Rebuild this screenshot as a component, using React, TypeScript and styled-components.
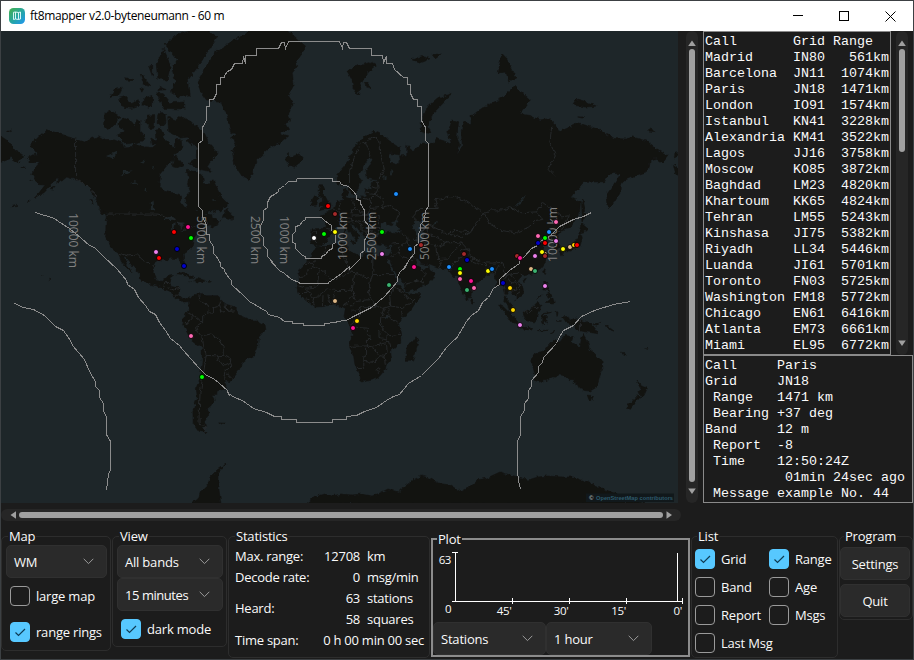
import React from 'react';
import styled, { createGlobalStyle } from 'styled-components';

const GlobalStyle = createGlobalStyle`
  * { box-sizing: border-box; }
  html, body { margin: 0; padding: 0; background: #1c1c1c; overflow: hidden; }
  body { font-family: 'Open Sans', 'Noto Sans', sans-serif; font-size: 13px; color: #fafafa; }
`;

/* ---------- geography ---------- */

const project = (lon: number, lat: number) => {
  const rad = (lat * Math.PI) / 180;
  const x = 328 + 1.79 * lon;
  const y = 315 - 102.6 * Math.log(Math.tan(Math.PI / 4 + rad / 2));
  return `${x.toFixed(1)} ${y.toFixed(1)}`;
};

const geoPath = (source: string, closed: boolean) =>
  'M' +
  source
    .split(',')
    .map((pair) => {
      const [lon, lat] = pair.trim().split(' ').map(Number);
      return project(lon, lat);
    })
    .join('L') +
  (closed ? 'Z' : '');

const LAND: string[] = [
  // North and Central America
  '-168 65.6,-164 66.5,-161.5 66.3,-164 67.6,-166.5 68.3,-163 69.5,-160 70.6,-156.5 71.3,-152 70.8,-145 70,-141 69.6,-136 69,-133 69.6,-128 70.2,-125 69.5,-120 69.5,-115 68.8,-114 67.8,-109 67.9,-108 68.6,-102 67.8,-98 67.7,-96 68.3,-95.5 69.5,-96 71,-94 71.8,-92 70.5,-91 69.5,-88 68.5,-86 67.5,-85.5 69.5,-82 69.5,-81.5 67.5,-86 66.3,-87 65,-90 63.8,-94 61.5,-94.7 59,-92.5 57.2,-88 56.5,-82.5 55.2,-82 53,-80 51.3,-78.8 51.5,-79.5 54.7,-76.8 56.5,-78.5 58.8,-77.5 60.5,-78 62.3,-73.5 62.3,-70 61,-69.5 59,-66 58.8,-64.5 60.3,-62 57.5,-60 55.3,-56 53,-57 51.5,-60 50.2,-66 50.2,-69 48.3,-65 49.2,-64.5 47.5,-61 46,-60 46.8,-61 45.3,-65.5 43.5,-66 45,-70 43.7,-70 41.8,-74 40.6,-75.5 38,-76 35.3,-81 31.8,-80 27,-80.5 25.3,-82 27,-83.5 30,-89 30.2,-90 29,-94 29.6,-97.3 27.5,-97.7 22.5,-95.5 18.7,-91.5 18.5,-90.3 21,-87 21.5,-88.3 17.5,-88.5 15.8,-83.3 15,-83.7 11,-81.5 9,-79.5 9.6,-77 8.5,-77.5 7.5,-80 7.3,-83 8.3,-85.7 10.5,-87.5 13,-92 14.3,-95 16,-100 17,-105.5 20,-105.5 22.5,-109 26,-112.5 30,-114.8 31.5,-112.5 27.5,-109.5 23,-112 25,-115 28,-117 32.5,-120.5 34.5,-122.5 37.5,-124.2 40.5,-124 46,-123 49,-127.5 51,-130 54.5,-134 58,-139.5 59.8,-146 60.8,-148 60,-151.5 59.3,-150.5 61.2,-154 59,-158.5 56.3,-163.5 54.8,-158 58.5,-162 58.7,-165.5 61.5,-164 63,-161 64.5,-166 64.5',
  // Baffin, Victoria, Banks, Ellesmere, Axel Heiberg, Devon, Melville and smaller islands
  '-61.5 66.5,-65 65,-67.5 63.5,-65 62.3,-71 62.7,-77.5 64.3,-73 65.5,-73 67.8,-78 70,-82 69.8,-89 71,-89.5 73.5,-85 73,-82 73.7,-76 72.6,-69 70.5,-67 69',
  '-117 70,-113 68.6,-105 69,-101.5 69.8,-105 71,-105 73,-107 73.2,-108 71.8,-110 72.8,-114 73.3,-118 72.3,-113 71,-117.5 70.6',
  '-125.5 72,-123 71.2,-119 72.5,-116 73.5,-121 74.4,-124.5 74.2',
  '-77 76.5,-78 78.5,-72 80,-62 82.4,-70 83.1,-85 82.5,-91 81.8,-84 80.5,-87 79.5,-85 78.2,-88 77,-84 76.4',
  '-96 80,-92 81.4,-88 80,-90 78.3,-95 78.7',
  '-80 74.7,-80 75.7,-88 75.6,-92 76.8,-96 76.9,-92 74.8',
  '-106 75,-106 76,-110 75.6,-113 76.4,-117 76.2,-115 75,-110 74.8',
  '-98 75,-98 76.6,-102 76.3,-104 75.4,-101 75',
  '-97 71.7,-96.8 73.7,-101 73.6,-102 72.6,-99 71.5',
  '-90.5 72.8,-91 74,-95 74,-95.5 72.6,-93 72',
  '-81 64,-84 65.8,-86 66,-87 63.6,-84 63.2',
  '-96 69.2,-99 69.8,-98 68.6,-95.8 68.6',
  '-115 77.6,-119 77.5,-122 76.3,-117 76.6', '-100 78,-105 79.2,-103 78,-99 77.8', '-111 78.2,-113 78.7,-109 78.5', '-98 80,-100 79.8,-98 78.8', '-95 77.2,-94 77.6,-91 77.3', '-75.5 68.2,-79 69.3,-77 69.6', '-103 77.4,-105 77.6,-104 77',
  '-59 47.7,-56 51.5,-55.5 50,-53.3 48.5,-53.5 46.7', '-128 50.8,-125 50,-123.5 48.4,-126 49.2',
  '-133 54,-131.8 54,-131.3 52.4', '-154.5 57.5,-152.5 58.2,-153.5 57', '-64.3 49.9,-62 49.4,-63 49.2',
  '-64 46.8,-62 46.5,-63.5 46.2', '-74 62.1,-79.5 62,-79 62.6', '-171.5 63.6,-169 63.3,-171 63.2', '-167 60.2,-165.6 60,-166.5 59.8',
  '-166 54.2,-168 53.5,-167 53.4', '-174 52.4,-177 52,-174 52',
  // Chukotka on the left edge
  '-183 70.2,-178 69,-175 67.3,-170 66.1,-173 64.4,-177 65.5,-180 65,-183 64.5', '-179 71,-177 71.3,-178 70.8',
  // Greenland, Iceland, Svalbard
  '-73 78.2,-68 79.9,-62 81.3,-50 82.3,-35 83.6,-22 82.8,-12 81.6,-18 80.4,-17 79.9,-20 79.2,-19 77.8,-22 76.5,-19.5 75.5,-22 74,-21 72.8,-24 72.4,-22 71.4,-27 70.8,-22.5 70.2,-27 68.8,-32 68,-38 65.8,-40 65,-42 62.5,-43.5 60,-48 61,-50.5 62.8,-52 64,-53.5 67,-51 69,-54.5 69.8,-51.5 70.5,-54.5 71,-56 73.5,-60 75.8,-68 76,-71 77',
  '-24 65.7,-22.5 66.4,-20.5 65.8,-16.2 66.5,-13.7 65.2,-18.7 63.4,-22.6 63.9,-22 64.8',
  '11 79.3,14 79.8,19 80,24 80.3,27 80,22 79.3,18.5 78,17 76.6,14 77.6,13.5 78.4', '21 78.2,24 77.5,22 77.6',
  // Caribbean
  '-84.8 22,-82 23,-77 21.6,-74.2 20.2,-77.5 19.9,-79 21.3', '-74.3 18.4,-72.8 19.9,-68.5 18.7,-71 18', '-78.3 18.3,-76.3 17.9,-77.5 17.8', '-67.2 18.4,-65.7 18.3,-67 18',
  // South America
  '-77.3 8.5,-75.5 10.7,-71.7 12.3,-71.6 10.2,-70 12,-68 10.7,-62 10.7,-60 8.5,-57 6,-51.5 4.3,-50 0,-48 -0.8,-44 -2.6,-40 -2.9,-37 -4.8,-35.2 -5.3,-34.8 -8,-37 -11,-39 -13,-39.3 -18,-41 -22,-45 -23.5,-48.5 -26,-48.8 -28.5,-53.5 -33.8,-55 -34.9,-58.4 -34,-57 -36.5,-58 -38.2,-62 -39,-62.2 -40.8,-65 -41,-63.6 -42.5,-65.3 -45,-67.5 -46.3,-65.8 -47.8,-69 -51,-68.4 -52.5,-70 -53.5,-67 -54.8,-72 -54.3,-75.3 -51.5,-75.5 -47,-73 -42,-73.5 -38,-71.5 -33,-70.3 -25,-70.3 -18.3,-76 -14,-79 -8,-81.2 -5.5,-80.5 -2.5,-80 0.7,-77.2 4',
  '-61 -51.5,-58 -51.6,-59.5 -52.2',
  // Africa
  '-5.9 35.8,-2 35.2,3 36.8,10 37.3,11 35,10.2 34,15.3 32.3,19.5 30.4,20 32.5,23 32.6,29 30.9,32.3 31.2,34.2 31.2,34.9 29.5,32.6 29.8,35.5 24,37.3 21,38.5 18,43 12.5,43.3 11.5,51.2 11.9,50.8 9.5,46 2.5,41 -2,39.5 -5,40.5 -10.5,40.6 -15,35 -20,35.5 -24,32.6 -26,32 -29,28 -33,25.6 -34,20 -34.8,18.4 -34,17 -29.5,15 -26.5,14.3 -22,11.8 -17,13.8 -11,12.2 -5.8,9 -1,9.7 3.8,8 4.6,6 4.3,4.4 6.3,-2 4.8,-7.5 4.4,-13.2 8.8,-16.7 12.5,-17.4 14.7,-16.3 19,-17 21.5,-14.5 26,-11.5 28.2,-9.8 30,-9.2 32.5,-6.8 34',
  '49.3 -12,50.5 -15.7,47 -25,44 -25,43.5 -22,44.4 -16.5,47.5 -14.7',
  // Eurasia, clockwise from Portugal
  '-9 37,-9.4 39,-8.8 43.3,-1.8 43.4,-1.2 46,-4.5 48.3,-1.5 48.8,-1.6 49.6,1.5 50.2,4 51.8,5 53.3,8.5 53.8,8.2 57,10.6 57.6,10.8 56,9.8 54.8,14 54,18.5 54.8,21 55.3,21.5 57.4,24 57.2,23.5 59.2,29.5 59.9,25 60.2,22 60.4,21.3 62.5,25.3 65,23.5 65.9,21 64.7,17.3 61.8,17.2 60.7,18.7 59.8,16.5 57.3,14.3 55.5,12.8 55.5,11.2 59,8 58.1,5.5 59,5 61.5,9 63.6,13 66,15.5 68.5,20 70,25.5 71.1,31 70.3,33 69.4,40.5 67.7,40 66.3,34 66.6,35 64.4,38 64,40.5 64.7,40 66,44 66.2,44 68.5,46 67.8,47 67,53 68.8,59 68.7,60.5 69.7,65 69.2,69 68.5,67 71,69.5 73,73 72.7,72 70,73.5 68.3,72 66.3,75 67.8,74.5 71,75.5 72.7,80.5 72.2,80.5 73.7,87 75,98 76.3,104.5 77.7,113 76,107 74,113 73.7,118 73,123.5 73.2,127 72.3,129 71,133 71.5,140 72.5,150 71.5,160 69.7,167 69.6,170 70,178 69.2,185 67.3,190 66.1,187 64.4,183 65.5,180 65,179 62.4,173 61.4,166 60,163.3 58.5,163 56,160 53.2,156.7 51,155.6 55.5,159 58.2,163.5 61.6,160 61.8,156.5 61.5,154.5 59.5,148 59.4,142.5 59.2,135.5 54.8,141 53,140.5 50,135.5 44,131.5 43,127.5 39.7,129.4 37,129 35.2,126.5 34.5,126.5 37.5,124.8 39.7,121.5 39,121.8 40.7,118 39,119 37.3,122.4 37.2,119.3 35,121.8 31.5,121.7 28.5,119 25.3,114.5 22.4,109.8 21.3,108 21.7,105.8 19,108.8 15.5,109.3 12,105 8.7,105 10.3,102.5 12,101 13.4,99.3 11,99.7 9.3,103.4 4.5,104 1.4,101.3 2.8,100.3 6,98.3 8,98.7 12,97.5 16.5,94.3 16,94.3 18.5,91.8 22.5,88.5 21.8,86.5 20,82.3 16.7,80.1 14,79.9 10.5,77.6 8.1,76.3 10.5,74.5 14.5,73 18,72.7 21,70 21,69 22.3,66.8 25,61.5 25.2,57.2 26.8,51.5 27.8,50 30.2,48 30,50 26.5,51.6 25.8,51.6 24.2,54.2 24.2,56.4 26.3,56.8 24.2,59.8 22.5,57.7 19,55 17,52.2 15.6,45 12.8,43.4 12.8,42.7 16.5,39 21,35 28,34.9 29.5,34.3 31.3,36 34.5,36 36.8,32.5 36.1,30.5 36.5,27.5 37,26.3 39.3,29 41.1,35 42,41.5 41.4,38 44.5,39.2 47.1,35 46.3,36.5 45.3,33.7 44.4,33 46,30.8 46.4,28.6 43.7,28 41.6,26 40.7,23 40.4,24 38,22.7 36.5,21 38.3,19.4 41.7,15.5 43.8,13.6 45.4,12.3 44.8,13.8 42.8,18.4 40.2,16.7 40.3,16 38,14 40.5,10.3 43.3,8.5 44.3,3.3 43.2,3 41.8,0 40,-0.5 38,-2 36.8,-5.5 36',
  '-5 50.1,-3 51.4,-5 51.8,-4.3 52.8,-3 53.5,-3.2 54.8,-5 54.8,-5.6 56.5,-5 58.6,-3 58.6,-2 57.5,-3 56,-1.5 55,0.3 53,1.6 52.7,1.3 51.2,-2 50.6', '-10 51.8,-8.5 54.3,-7.3 55.3,-5.6 54.5,-6.3 52.2',
  '8.3 39,8.3 41,9.6 41,9.5 39.2', '8.7 42.6,9.4 42.9,9.3 41.4', '12.5 38,15.5 38.2,15 36.7', '23.6 35.4,26.2 35.2,24.5 35', '32.4 35,34.4 35.6,33.5 34.7',
  '52 71,52 72.5,55.5 75,61 76.2,68.5 76.9,67 76.2,58.5 74,56 72,57.5 70.7,54 70.8',
  '95 79.2,97 81,100 80.5,105 78.7,101 78.2,99.5 79.3', '47 80.5,52 80.8,57 80.6,51 80.2', '58 81,63 81,60 80.6', '137 75.3,139 76.1,145 75.7,150 75.1,143 75', '139.5 73.5,143.5 73.5,142 73.3', '178.5 71.1,181 71.6,182.5 71',
  '194 67,196 66.2,193.5 65.6', '193 64,196 63,196 61,194 62',
  // Sakhalin, Japan, Taiwan
  '142.3 54.3,143.3 52,143.2 49.3,144.3 49,142.5 46,142 49,141.7 52.5',
  '140 41.5,141.7 45.4,145.2 43.3,143.2 42', '140.2 40.7,141.4 41.3,142 39.5,140.8 35.8,138.3 34.7,135.5 33.6,131 34,132.5 35.4,136 35.8,137.2 37.4', '129.8 33.3,131.8 33.6,130.8 31.2', '132.3 33.4,134.5 34.2,133.5 33',
  '120.1 23,121.7 25.2,120.8 22', '109 19.5,110.8 20,109.5 18.3', '79.8 8,80.2 9.7,81.8 7,80.5 6',
  // South-east Asia
  '95.3 5.6,98 4.5,103.7 -1,106 -3,105.7 -5.8,102.3 -4,98.7 1.7', '105.3 -6.8,108.5 -6.7,112.7 -7,114.4 -8.3,108 -7.8', '109 1.5,111.2 2.5,113.5 3.3,116.8 7,119 5.2,117.7 1,116 -3.8,111.5 -3.3,110 -1.5',
  '119.3 -3.3,119.8 0.7,124.8 1.5,121 0.5,120.3 -0.9,123.3 -0.9,121.3 -2,122.7 -5,120.4 -2.9,120.4 -5.5', '120.5 18.4,122.3 18.4,121.5 15.7,124 13,122.5 13.5,120.6 14', '122 7,125.5 9.7,126.4 7,125.5 5.7,124 7', '117.2 8.4,119.5 11.2,119 10', '122 11.7,124.5 12.4,125 10.5,123 9.3',
  '131 -1,134 -0.8,135 -3.3,138 -1.7,144 -3.8,147.6 -6,150.7 -10.4,147 -9.7,143 -9.2,138 -8.2,138 -5.7,133 -4', '148.5 -5.7,152 -4.3,150 -6.2', '124 -10.2,127 -8.5,125 -9.5', '127.5 1.5,128.5 1,128 -0.7', '128 -3.2,130.5 -3.3,129 -3.5', '117 -8.6,119 -8.6,122.5 -8.5,119.5 -8.9', '155 -5.5,160 -9,157 -8',
  // Australia and New Zealand
  '113.7 -22.5,114 -26,115.7 -32,115.2 -34.2,118 -35,123.5 -33.9,129 -31.7,132 -32,135.5 -34.8,137.7 -33,137 -35.3,138.3 -34.7,140.5 -38,143.5 -38.8,146.4 -39,150 -37.4,151.5 -33,153.6 -28.5,153 -25,149 -21,146 -18.8,145.3 -15,142.6 -10.8,141.6 -13,140.8 -17.5,136 -15,136.8 -12.2,132.6 -11.3,129.5 -14.9,126 -14,122.3 -17.8,121 -19.7,116.8 -20.6',
  '144.7 -40.8,148.3 -41,147 -43.5,145.7 -43', '172.7 -34.5,175 -36.5,178.4 -37.8,176.5 -41,174.8 -41.4,173.8 -39.3,175 -38', '172.7 -40.6,174.2 -41.8,171 -44.5,168.8 -46.6,166.5 -46', '164 -20.3,167 -22.3,165 -21.8', '177.3 -18,178.7 -17.8,178 -18.3',
  '-160 22,-159.3 22,-159.5 21.8', '-156 20.2,-155 19.5,-155.8 19',
];

const BORDERS: string[] = [
  '-141 69.6,-141 60.3,-137 59,-130 56,-130 54.8', '-123 49,-95 49,-89 48,-84.5 46.5,-82.5 45.3,-82.5 42.5,-79 43,-76 44.2,-71.5 45,-69 47.3,-67 45',
  '-117 32.5,-111 31.3,-106.5 31.8,-103 29,-99.5 27.5,-97.3 26', '-92 14.5,-91 17.8,-89 17.8', '-89 15,-86 13.7,-83.3 15', '-85.7 11,-83.7 11',
  '-72 11,-72.5 8,-67.5 6,-67 1.2,-70 0,-70 -4.2,-74 -7,-73 -9.5,-70.5 -11,-69.5 -17.5', '-78.8 1.3,-75 -0.2,-79 -5,-80.3 -3.4', '-75 -0.2,-70 -4.2', '-67 1.2,-64 1,-64 4,-60.5 5,-60 1.5,-56.5 2,-52 2.3', '-60.5 5,-60 8', '-57 6,-56.5 2', '-54 5.5,-54.5 2.3',
  '-70.5 -11,-65.5 -10,-60.2 -13.7,-58 -18,-58 -22,-62.5 -22.2,-68 -22,-69.5 -17.5', '-58 -22,-54.3 -24,-54.6 -25.6,-58.5 -27.3,-62.5 -22.2', '-54.6 -25.6,-53.8 -27.2,-57.6 -30.2,-53.5 -33.5', '-57.6 -30.2,-58.3 -34', '-68 -22,-70 -33,-71.5 -40,-72 -49,-72 -52,-68.5 -52.4,-68.6 -54.7',
  '-8.7 27.7,-8.7 26,-4.8 25,3 19.2,12 23.5,9.5 30,7.5 34,8.5 37', '-8.7 27.7,-13 27.7', '-8.7 27.7,-1.5 32.2,-2 35', '12 23.5,15 23,24 19.5,25 22,25 31.5', '25 22,37 22', '24 19.5,22.5 13,24 8.7,27.5 5,31 3.7,35 5,41.8 4,48 8,42 11', '15 23,13.5 13.7,4 13.5,3.5 11.7,2.7 6.3', '-4.8 25,-6 15.5,-12 14.8,-16.5 16', '-17 20.8,-13 21.3,-12 23.5,-8.7 26', '-12 14.8,-11.5 12.4,-16.5 12.4', '4 13.5,0 15,-5.5 10.5,-8 10,-11.5 12.4', '0 11,1 6', '-2.8 11,-3 5', '-8 10,-8.3 7.6,-7.5 4.5', '-13 9,-10.5 8.5,-11.5 7', '13.5 13.7,15.5 7.5,13 5,8.5 6,10 7,13.5 11', '15.5 7.5,24 8.7', '13 2.2,16 2.2,18.6 4.5,27.5 5', '18.6 4.5,16.5 -2,12.5 -5', '31 3.7,29.5 -1,29.3 -4.5,30.8 -8.3,28.5 -9,28.5 -13', '12.3 -6,17 -7,22 -7.3,22 -11,24 -11,24 -13,22 -13,22 -17,12 -17.2', '41.8 4,41 -1.7', '34 4,34 -1,39.3 -4.7', '29.5 -1,34 -1', '30.8 -8.3,34.5 -11.5,40.3 -10.7', '28.5 -13,33 -13.8,33 -10', '22 -17,25.3 -17.7,30.5 -15.7,34.3 -15,35 -17', '25.3 -17.7,29 -22.2,31.3 -22.4,33 -20,32.8 -17', '21 -18,21 -22,20 -22,20 -28.5,16.8 -28.6', '20 -25,25.5 -25.6,29 -22.2', '31.3 -22.4,32 -26.8', '27 -29.6,28.5 -28.7,29.3 -29.5,28 -30.5,27 -29.6', '36.5 15,38 18', '34.5 10,36.5 15,42.5 12.5', '34.5 10,35 5',
  '-1.7 43.3,3 42.5', '-7 41.9,-7 37.3', '-8.5 42,-6.5 42', '2.5 51,6 49.5,8 49,7.5 47.5,6.2 46.3,7.5 43.8', '7 53.3,6 50.5', '7.5 47.5,13 47.5,13.7 46,7 46', '14.3 53.8,15 51,12.3 50.2,13.8 48.6,17 48.7,22.5 49', '15 51,18.8 49.5,22.5 49,24 51,23.5 54,19.5 54.4', '13.7 46,16.5 46.5,20 46.1,22.8 48,28 48.2,28.2 45.5', '20 46.1,22.6 44.2,28.5 43.8', '16 46,19 45,19 42.5,22.5 42.3,26.3 41.8', '22.6 44.2,22.5 42.3,21 40.8', '24 51,30.5 51.4,34 52,40 49.6,38.3 47.2', '23.5 54,26.5 55.6,31 54,30.5 51.4', '26.5 55.6,28 57.5,27.5 59.5', '21 56.2,26.5 55.6', '24.5 58,27.5 57.6', '28 60.5,31.5 62.8,29.5 66,29 69.3,26 70,21 69,24 66', '21 69,18 68.5,14 65,12 62,12 59',
  '36 36.8,42 37.2,44.8 37.2,44.5 40,41.5 41.4', '42 37.2,39 33,35.5 31', '44.8 37.2,46 34,48 30', '39 33,42 31,47 29', '48 39,54 37.4,60 36.6,61 31.5,63 27.2,61.6 25.2', '52 19,55 22.5,52 24', '43 17,48 18,52 19,53 16.6', '61 35.5,66.5 37.3,71.5 37.5,74.8 37.2,71 34,69.3 31.8,66.3 29.8,61 29.6',
  '50 46,47 48,51 51,61 51,60 54,70 55,77 53.5,83 51,87.3 49.2,82.5 45.5,80 42,74 40,67 41.2,56 45,52 42', '56 45,56 41.3,66.5 37.3', '67 41.2,71 42.7,80 42', '87.3 49.2,91 50.5,98 50.5,102 51.3,108 49.5,116.5 49.8,120 53,127 50,130.8 48,134.8 48.4,131 43.2', '87.3 49.2,91 45,96.5 42.7,105 41.6,112 44,116 46.5,120 47,116.5 49.8', '124.3 40,128 42,130.7 42.4', '126.7 37.8,128.4 38.6',
  '74.8 37.2,78.5 34,79 31,81 30.2,88 27.9,92 27.8,97.3 28.2,98.7 25,97.5 24,100 21.6,102 22.4,106.7 22.7,108 21.6', '81 30.2,80.2 28.7,88 26.5,88 27.9', '68.2 23.8,70 27.8,74.5 31,74.5 34.7,78.5 34', '88.8 22,88.3 25.5,92.3 25,92.3 21', '97.3 28.2,94.5 25,93 22,92.3 21', '100 21.6,97.7 18.5,99 14,98.7 10.5', '100.3 20.3,102 18,104.8 17.5,105.6 14.4,102.5 13.7,103 11.7', '102 22.4,104.5 19,107.5 16,107.5 12.4,104.5 10.5', '109.7 2,112 1.4,115 4.3,117.7 4.1', '141 -2.6,141 -9.1',
  '125 72,124 69,127 66,123 63,127 61',
];

const WATER: string[] = [
  '-92 46.7,-88 48.7,-84.7 47,-88 46.8', '-87.7 42,-86.4 42,-85 45.5,-87.5 44.7', '-84 46,-80 45.7,-82 43.2,-83.5 44.3', '-83 41.5,-79 42.8,-81 42.7', '-79.5 43.3,-76.4 44,-77 43.4',
  '-99 50.5,-97 50.5,-97.5 53.7,-99 53.3', '-124 66,-118 67,-120 65.3', '-116 61,-109 62.5,-114 62.4', '-111 59,-106 59.3,-108 59.6', '-102 58,-101 56.5,-102.5 56.8', '-99 63,-97 63.5,-98 62.8', '-105 64.5,-102 65,-103 64.3', '-74 51,-72 50.6,-73 50.3', '-65 54,-63 54.3,-64 53.6',
  '47 45,50 46.5,53 46.7,53 45,51 44.5,54 41,53.8 37,50 37.3,49 40.5', '58.5 44,61.5 46,60 46.5', '104 51.6,110 55.7,108 53', '31 59.9,33 60.5,31 61.5', '34.5 61,36 62,35 62.7', '31.8 -1,34 0,33.5 -2.5,32 -2.3', '29.3 -3.5,30.8 -8.5,30.2 -7', '34 -10,35 -14,34.4 -11.8',
];

/* ---------- range rings: vertices at a third of a pixel, per map tile ---------- */

type Tile = [originX: number, originY: number, vertices: string];

const ringPath = (tiles: Tile[]) =>
  'M' +
  tiles
    .flatMap(([ox, oy, vertices]) =>
      vertices.split(' ').map((v) => {
        const [x, y] = v.split(',').map(Number);
        return `${Math.floor(ox + (x - 1) / 3) + 0.5} ${Math.floor(oy + y / 3) + 0.5}`;
      }),
    )
    .join('L');

const RINGS: Tile[][] = [
  [[225, 30, '203,636 203,612 212,605 212,588 225,585 233,573 243,568 243,562 290,562 300,570 310,580 321,586 321,602 332,610 332,636 323,642 323,655 312,662 303,672 291,678 291,686 243,686 243,679 233,675 222,665 212,655 212,640 203,636']],
  [
    [225, 30, '215,446 323,446 323,455 343,455 350,463 370,470 387,485 395,495 395,507 407,512 407,520 418,540 418,570 430,587 430,610 418,630 418,660 407,670 407,684 395,697 380,712 374,718'],
    [225, 260, '375,20 350,40 330,55 310,66 310,71 223,71 223,66 200,57 180,40 165,30 148,15 136,0'],
    [225, 30, '160,718 150,705 140,690 127,680 127,658 116,645 116,622 107,612 107,587 116,570 116,542 127,532 127,518 137,500 150,492 160,485 162,478 180,465 190,455 215,455 215,446'],
  ],
  [
    [225, 30, '190,34 183,55 178,36 170,36 160,55 95,55 95,77 62,77 62,100 55,78 52,100 28,100 20,118 8,125 0,137'],
    [0, 0, '673,232 663,232 663,253 650,253 650,280 640,297 629,297 629,320 620,320 620,360 608,382 608,420 597,430 597,620 608,630 608,650 620,675 620,703 630,703 630,720 640,740 640,760 650,770 663,790 663,800 673,808'],
    [0, 260, '675,35 690,55'],
    [225, 260, '20,60 20,72 60,110 75,125 125,155 130,162 165,172 180,183 202,183 202,190 235,190 235,196 298,196 298,190 335,188 335,184 365,180 385,170 405,160 440,142 460,125 480,110 500,85 517,65 517,50 527,35 537,25 550,5'],
    [225, 30, '535,718 545,707 550,692 570,670 570,650 580,640 580,610 588,600 588,582 600,570 603,540 610,530 610,340 602,330 602,293 590,270 590,230 578,230 578,208 567,208 557,190 557,163 548,163 548,142 536,142 510,118 503,100 484,100 484,78 475,98 473,77 440,77 440,55 375,55 365,36 356,36 352,55 343,34 190,34'],
  ],
  [
    [0, 0, '108,637 165,655 175,663 208,685 243,712 268,735 285,742 310,770 352,808'],
    [0, 260, '380,60 383,72 405,88 416,112 438,135 450,153 468,163 480,187 498,210 512,235 540,255 548,268 575,297 600,325 620,347 640,355 660,370 683,390 690,405'],
    [225, 260, '10,400 30,412 52,422 85,445 125,457 148,468 170,468 170,478 214,478 214,487 323,487 323,478 364,478 364,470 395,465 420,453 455,443 485,422 505,410 525,402 550,370 590,345 612,325 640,295 665,262 690,238'],
    [450, 260, '20,236 50,185 65,165 85,150 98,128 115,112 130,85 148,72'],
    [450, 30, '148,747 178,720 208,700 210,690 225,680 245,655 262,647 275,632 300,620 330,590 370,568 400,558 425,547'],
  ],
  [[0, 260, '45,130 70,142 100,147 135,165 168,198 192,210 213,240 218,257 255,297 270,335 287,365 287,380 298,390 298,413 310,430 310,455 320,470 320,522 331,543 331,630 327,640 319,690']],
  [[450, 260, '212,689 207,660 202,635 202,542 211,525 211,468 223,452 223,430 235,415 235,390 246,380 246,362 265,338 265,320 277,308 280,293 320,250 325,235 340,212 370,195 395,170 435,150 490,132 543,124']],
];

const RING_LABELS: { text: string; x: number; y: number; down?: boolean; length: number }[] = [
  { text: '10000 km', x: 69, y: 213, down: true, length: 55 },
  { text: '5000 km', x: 197, y: 216, down: true, length: 48 },
  { text: '2500 km', x: 251, y: 216, down: true, length: 48 },
  { text: '1000 km', x: 280, y: 216, down: true, length: 48 },
  { text: '1000 km', x: 347, y: 260, length: 48 },
  { text: '2500 km', x: 376, y: 260, length: 48 },
  { text: '5000 km', x: 429, y: 260, length: 48 },
  { text: '10000 km', x: 557, y: 262, length: 55 },
];

const STATIONS: [number, number, string][] = [
  [174, 232, '#ff0000'], [188, 227, '#ff1493'], [191, 238, '#00ff00'], [177, 249, '#0000cd'], [156, 252, '#ee82ee'], [159, 258, '#ff0000'], [184, 266, '#0000cd'],
  [328, 206, '#ff0000'], [335, 214, '#a52a2a'], [324, 234, '#00ff00'], [335, 232, '#ffff00'], [314, 238, '#ffffff'], [396, 194, '#1e90ff'], [382, 232, '#00ff00'], [382, 254, '#ee82ee'],
  [410, 249, '#1e90ff'], [421, 245, '#a52a2a'], [414, 267, '#ff1493'], [449, 267, '#1e90ff'], [464, 254, '#a52a2a'], [467, 260, '#0000cd'], [460, 269, '#00ff00'], [460, 273, '#ffff00'],
  [460, 279, '#ff69b4'], [471, 281, '#ff1493'], [467, 290, '#3cb371'], [474, 288, '#ff69b4'], [488, 271, '#ffff00'], [492, 269, '#1e90ff'], [503, 283, '#0000cd'], [510, 288, '#ffd700'],
  [517, 256, '#a52a2a'], [520, 258, '#ff1493'], [535, 256, '#ee82ee'], [531, 269, '#deb887'], [535, 271, '#3cb371'], [538, 236, '#ff69b4'], [549, 232, '#1e90ff'], [545, 238, '#00ff00'],
  [538, 243, '#0000cd'], [545, 243, '#ff0000'], [545, 254, '#deb887'], [542, 252, '#ffff00'], [545, 256, '#a52a2a'], [556, 241, '#ee82ee'], [556, 222, '#ff69b4'], [563, 249, '#ffff00'],
  [570, 247, '#deb887'], [574, 245, '#ffd700'], [577, 245, '#ff0000'], [545, 286, '#ee82ee'], [191, 336, '#ff69b4'], [202, 377, '#00ff00'], [389, 285, '#3cb371'], [335, 301, '#deb887'],
  [357, 321, '#ffd700'], [353, 328, '#ff1493'], [513, 310, '#ffd700'], [520, 325, '#ee82ee'],
];

/* ---------- window ---------- */

const Window = styled.div`
  width: 914px;
  height: 660px;
  display: flex;
  flex-direction: column;
  background: #1c1c1c;
  border: 1px solid #3c4043;
  overflow: hidden;
`;

const TitleBar = styled.header`
  height: 30px;
  flex: none;
  display: flex;
  align-items: center;
  padding-left: 8px;
  background: #fff;
  color: #000;
`;

const Title = styled.span`
  flex: 1;
  margin: -1px 0 0 5px;
  font-size: 12px;
  letter-spacing: -0.34px;
  white-space: pre;
`;

const WindowButton = styled.span`
  width: 46px;
  height: 30px;
  display: flex;
  align-items: center;
  justify-content: center;
`;

const Upper = styled.div`
  height: 472px;
  flex: none;
  display: flex;
`;

const MapCanvas = styled.svg`
  width: 677px;
  height: 472px;
  flex: none;
  margin-right: 8px;
  background: #1e2629;
`;

const Side = styled.div`
  display: flex;
  flex-direction: column;
  width: 209px;
  margin-left: 5px;
`;

const ListRow = styled.div`
  display: flex;
  gap: 5px;
  height: 324px;
`;

const Console = styled.pre<{ $width: number; $height: number }>`
  margin: 0;
  width: ${(p) => p.$width}px;
  height: ${(p) => p.$height}px;
  flex: none;
  padding: 2px 0 0 1px;
  border: 1px solid #8a8a8a;
  font: 13.33px/16px 'Liberation Mono', monospace;
  color: #fafafa;
  overflow: hidden;
`;

/* ---------- scrollbars ---------- */

const Track = styled.div<{ $horizontal?: boolean; $length: number }>`
  flex: none;
  display: flex;
  align-items: center;
  flex-direction: ${(p) => (p.$horizontal ? 'row' : 'column')};
  width: ${(p) => (p.$horizontal ? p.$length : 12)}px;
  height: ${(p) => (p.$horizontal ? 12 : p.$length)}px;
  padding: ${(p) => (p.$horizontal ? '0 9px 0 8.5px' : '8.5px 0 9px')};
  border-radius: 6px;
  background: #262626;
`;

const Thumb = styled.div<{ $horizontal?: boolean; $length: number }>`
  width: ${(p) => (p.$horizontal ? p.$length : 6)}px;
  height: ${(p) => (p.$horizontal ? 6 : p.$length)}px;
  margin: ${(p) => (p.$horizontal ? '0 auto 0 3px' : '3px 0 auto')};
  border-radius: 3px;
  background: #a0a0a0;
`;

const Arrow = styled.svg`
  display: block;
  flex: none;
  fill: #a0a0a0;
`;

const ARROWS = {
  up: 'M4 0.5L7.8 6H0.2Z',
  down: 'M4 6L7.8 0.5H0.2Z',
  left: 'M0.5 4L6 0.2V7.8Z',
  right: 'M6 4L0.5 0.2V7.8Z',
};

function Scrollbar({ horizontal, length, thumb }: { horizontal?: boolean; length: number; thumb: number }) {
  const [w, h] = horizontal ? [6.5, 8] : [8, 6.5];
  return (
    <Track $horizontal={horizontal} $length={length}>
      <Arrow width={w} height={h}><path d={horizontal ? ARROWS.left : ARROWS.up} /></Arrow>
      <Thumb $horizontal={horizontal} $length={thumb} />
      <Arrow width={w} height={h}><path d={horizontal ? ARROWS.right : ARROWS.down} /></Arrow>
    </Track>
  );
}

const BottomScroll = styled.div`
  height: 18px;
  flex: none;
  padding-top: 6px;
`;

/* ---------- controls ---------- */

const Lower = styled.div`
  flex: 1;
  display: flex;
  align-items: flex-start;
  gap: 1px;
  padding-top: 15px;
`;

const Group = styled.section<{ $width: number; $height: number; $pad: string; $gap?: number; $plot?: boolean }>`
  position: relative;
  flex: none;
  display: flex;
  flex-direction: column;
  align-items: flex-start;
  gap: ${(p) => p.$gap ?? 0}px;
  width: ${(p) => p.$width}px;
  height: ${(p) => p.$height}px;
  margin-top: ${(p) => (p.$plot ? 2 : 0)}px;
  padding: ${(p) => p.$pad};
  border: ${(p) => (p.$plot ? '2px solid #8c8c8c' : '1px solid #2d2d2d')};
  border-radius: ${(p) => (p.$plot ? 0 : 5)}px;
`;

const Legend = styled.h2<{ $left: number }>`
  position: absolute;
  top: -9px;
  left: ${(p) => p.$left}px;
  margin: 0;
  padding: 0 1px;
  background: #1c1c1c;
  font-size: 13px;
  font-weight: 400;
  line-height: 17px;
  letter-spacing: -0.2px;
`;

const Combo = styled.div<{ $width: number; $tight?: boolean }>`
  display: flex;
  align-items: center;
  justify-content: space-between;
  width: ${(p) => p.$width}px;
  height: 33px;
  padding: 0 12px 0 7px;
  border: 1px solid #303030;
  border-radius: 5px;
  background: #2a2a2a;
  letter-spacing: ${(p) => (p.$tight ? -0.45 : -0.2)}px;
  white-space: nowrap;
`;

const Button = styled.button`
  width: 70px;
  height: 33px;
  padding: 0;
  border: 1px solid #303030;
  border-radius: 5px;
  background: #2a2a2a;
  color: #fafafa;
  font: inherit;
  letter-spacing: -0.2px;
`;

const CheckLabel = styled.div<{ $top?: number; $left?: number }>`
  display: flex;
  align-items: center;
  gap: 6px;
  height: 20px;
  margin: ${(p) => p.$top ?? 0}px 0 0 ${(p) => p.$left ?? 0}px;
  letter-spacing: -0.2px;
  white-space: nowrap;
`;

const Box = styled.span<{ $on?: boolean }>`
  display: flex;
  flex: none;
  width: 20px;
  height: 20px;
  border-radius: 4px;
  border: 1px solid ${(p) => (p.$on ? '#57c8ff' : '#9a9a9a')};
  background: ${(p) => (p.$on ? '#57c8ff' : 'transparent')};
`;

function Check({ label, on, top, left }: { label: string; on?: boolean; top?: number; left?: number }) {
  return (
    <CheckLabel $top={top} $left={left}>
      <Box $on={on}>
        {on && (
          <svg width="18" height="18" viewBox="0 0 18 18" fill="none" stroke="#0f3c55" strokeWidth="1.2">
            <path d="M4.5 9.5L7.5 12.5L14 6" />
          </svg>
        )}
      </Box>
      {label}
    </CheckLabel>
  );
}

function Select({ label, width, tight }: { label: string; width: number; tight?: boolean }) {
  return (
    <Combo $width={width} $tight={tight}>
      {label}
      <svg width="11" height="7" viewBox="0 0 11 7" fill="none" stroke="#9a9a9a">
        <path d="M0.7 0.8L5.5 5.6L10.3 0.8" />
      </svg>
    </Combo>
  );
}

const Stats = styled.div`
  display: grid;
  grid-template-columns: 84px 41px 1fr;
  grid-template-rows: repeat(5, 21px);
  align-items: center;
  width: 189px;
  letter-spacing: -0.25px;
  white-space: nowrap;
`;

const Stat = styled.span<{ $area: string; $right?: boolean }>`
  grid-area: ${(p) => p.$area};
  text-align: ${(p) => (p.$right ? 'right' : 'left')};
`;

const Unit = styled(Stat)`
  padding-left: 7px;
`;

const Chart = styled.svg`
  display: block;
  width: 255px;
  height: 82px;
  font-size: 11.5px;
  fill: #fafafa;
`;

const PlotControls = styled.div`
  display: flex;
`;

const CheckGrid = styled.div`
  display: grid;
  grid-template-columns: 74px 60px;
  grid-auto-rows: 28px;
`;

/* ---------- content ---------- */

const LIST_ROWS: [string, string, number][] = [
  ['Madrid', 'IN80', 561], ['Barcelona', 'JN11', 1074], ['Paris', 'JN18', 1471], ['London', 'IO91', 1574], ['Istanbul', 'KN41', 3228],
  ['Alexandria', 'KM41', 3522], ['Lagos', 'JJ16', 3758], ['Moscow', 'KO85', 3872], ['Baghdad', 'LM23', 4820], ['Khartoum', 'KK65', 4824],
  ['Tehran', 'LM55', 5243], ['Kinshasa', 'JI75', 5382], ['Riyadh', 'LL34', 5446], ['Luanda', 'JI61', 5701], ['Toronto', 'FN03', 5725],
  ['Washington', 'FM18', 5772], ['Chicago', 'EN61', 6416], ['Atlanta', 'EM73', 6661], ['Miami', 'EL95', 6772],
];

const LIST_TEXT = [
  'Call       Grid Range',
  ...LIST_ROWS.map(([call, grid, km]) => `${call.padEnd(11)}${grid}${String(km).padStart(6)}km`),
].join('\n');

const DETAIL_TEXT = [
  'Call     Paris',
  'Grid     JN18',
  ' Range   1471 km',
  ' Bearing +37 deg',
  'Band     12 m',
  ' Report  -8',
  ' Time    12:50:24Z',
  '          01min 24sec ago',
  ' Message example No. 44',
].join('\n');

function WorldMap() {
  return (
    <MapCanvas viewBox="1 31 677 472">
      <defs>
        <filter id="coast" filterUnits="userSpaceOnUse" x="1" y="31" width="677" height="472" colorInterpolationFilters="sRGB">
          <feTurbulence type="fractalNoise" baseFrequency="0.22" numOctaves="2" seed="4" />
          <feDisplacementMap in="SourceGraphic" scale="5" xChannelSelector="R" yChannelSelector="G" />
        </filter>
      </defs>
      <g filter="url(#coast)">
        <g fill="#121310" stroke="#121310" strokeWidth="0.6" strokeLinejoin="round">
          {LAND.map((d, i) => <path key={i} d={geoPath(d, true)} />)}
          <path d="M191 504L198 499L201 491L208 485L210 477L217 470L226 464L219 473L219 490L221 504Z" />
          <path d="M306 504L315 497L325 494L332 496L341 494L352 495L362 494L372 496L380 493L388 489L398 492L408 484L415 479L422 476L429 478L438 483L450 485L461 492L468 488L477 480L487 478L500 472L510 475L518 477L528 480L538 477L547 476L562 477L573 477L587 482L600 488L614 493L645 504Z" />
        </g>
        <g fill="#1e2629">{WATER.map((d, i) => <path key={i} d={geoPath(d, true)} />)}</g>
        <g fill="none" stroke="#272a2c" strokeWidth="0.9" strokeLinejoin="round">
          {BORDERS.map((d, i) => <path key={i} d={geoPath(d, false)} />)}
        </g>
      </g>
      <rect x="586" y="493.5" width="88" height="8.5" fill="#11181b" />
      <g fontFamily="'Liberation Sans', sans-serif" fontSize="6" fontWeight="700">
        <text x="589" y="500" fill="#a8a8a8">©</text>
        <text x="596" y="500" fill="#2d5a6c" textLength="77" lengthAdjust="spacingAndGlyphs">OpenStreetMap contributors</text>
      </g>
      <g fill="none" stroke="#8c8c8c" strokeWidth="1" shapeRendering="crispEdges">
        {RINGS.map((tiles, i) => <path key={i} d={ringPath(tiles)} />)}
      </g>
      <g fill="#808080" fontSize="13.5">
        {RING_LABELS.map((l, i) => (
          <text key={i} transform={`translate(${l.x} ${l.y}) rotate(${l.down ? 90 : -90})`} textLength={l.length} lengthAdjust="spacingAndGlyphs">
            {l.text}
          </text>
        ))}
      </g>
      {STATIONS.map(([x, y, color], i) => (
        <circle key={i} cx={x} cy={y} r="2.5" fill={color} stroke="#000" strokeWidth="0.9" />
      ))}
    </MapCanvas>
  );
}

function Plot() {
  return (
    <Chart viewBox="433 540 255 82">
      <path d="M452 552.5H458M455.5 552V601.5M452 601.5H683M512.5 598V604M569.5 598V604M626.5 598V604M682.5 598V604M677.5 553V601" stroke="#fff" fill="none" shapeRendering="crispEdges" />
      <text x="451" y="564" textAnchor="end" letterSpacing="-0.4">63</text>
      <text x="451.5" y="613" textAnchor="end">0</text>
      <text x="511.5" y="614.5" textAnchor="end" letterSpacing="-0.3">45'</text>
      <text x="568.5" y="614.5" textAnchor="end" letterSpacing="-0.3">30'</text>
      <text x="626" y="614.5" textAnchor="end" letterSpacing="-0.3">15'</text>
      <text x="682" y="614.5" textAnchor="end" letterSpacing="-0.3">0'</text>
    </Chart>
  );
}

function AppIcon() {
  return (
    <svg width="16" height="16" viewBox="0 0 16 16">
      <defs>
        <linearGradient id="badge" x1="0" y1="0" x2="1" y2="1">
          <stop offset="0" stopColor="#43b049" />
          <stop offset="0.55" stopColor="#25a5a8" />
          <stop offset="1" stopColor="#2196f3" />
        </linearGradient>
      </defs>
      <rect width="16" height="16" rx="4.5" fill="url(#badge)" />
      <path d="M4.5 4.3L6.5 4V11L4.5 11.5ZM6.5 4L9.5 4.5V11.5L6.5 11M9.5 4.5L11.5 4V11L9.5 11.5" fill="none" stroke="#e9ffff" strokeWidth="0.9" />
    </svg>
  );
}

export default function App() {
  return (
    <Window>
      <GlobalStyle />
      <TitleBar>
        <AppIcon />
        <Title>ft8mapper v2.0-byteneumann - 60 m</Title>
        <WindowButton><svg width="10" height="10"><path d="M0 4.5H10" stroke="#000" /></svg></WindowButton>
        <WindowButton><svg width="10" height="10"><rect x="0.5" y="0.5" width="9" height="9" fill="none" stroke="#000" /></svg></WindowButton>
        <WindowButton><svg width="11" height="11"><path d="M0.5 0.5L10.5 10.5M10.5 0.5L0.5 10.5" stroke="#000" /></svg></WindowButton>
      </TitleBar>
      <Upper>
        <WorldMap />
        <Scrollbar length={472} thumb={433} />
        <Side>
          <ListRow>
            <Console $width={188} $height={324}>{LIST_TEXT}</Console>
            <Scrollbar length={324} thumb={103} />
          </ListRow>
          <Console $width={210} $height={148}>{DETAIL_TEXT}</Console>
        </Side>
      </Upper>
      <BottomScroll><Scrollbar horizontal length={680} thumb={644} /></BottomScroll>
      <Lower>
        <Group $width={110} $height={115} $pad="8px 0 0 4px">
          <Legend $left={6}>Map</Legend>
          <Select label="WM" width={101} />
          <Check label="large map" top={8} left={4} />
          <Check label="range rings" on top={16} left={4} />
        </Group>
        <Group $width={115} $height={111} $pad="8px 0 0 4px">
          <Legend $left={6}>View</Legend>
          <Select label="All bands" width={106} />
          <Select label="15 minutes" width={106} tight />
          <Check label="dark mode" on top={8} left={4} />
        </Group>
        <Group $width={202} $height={122} $pad="8px 0 0 6px">
          <Legend $left={6}>Statistics</Legend>
          <Stats>
            <Stat $area="1 / 1">Max. range:</Stat><Stat $area="1 / 2" $right>12708</Stat><Unit $area="1 / 3">km</Unit>
            <Stat $area="2 / 1">Decode rate:</Stat><Stat $area="2 / 2" $right>0</Stat><Unit $area="2 / 3">msg/min</Unit>
            <Stat $area="3 / 1 / 5 / 2">Heard:</Stat><Stat $area="3 / 2" $right>63</Stat><Unit $area="3 / 3">stations</Unit>
            <Stat $area="4 / 2" $right>58</Stat><Unit $area="4 / 3">squares</Unit>
            <Stat $area="5 / 1">Time span:</Stat><Stat $area="5 / 2 / 6 / 4" $right>0 h 00 min 00 sec</Stat>
          </Stats>
        </Group>
        <Group $width={259} $height={119} $pad="0" $plot>
          <Legend $left={4}>Plot</Legend>
          <Plot />
          <PlotControls>
            <Select label="Stations" width={113} />
            <Select label="1 hour" width={106} />
          </PlotControls>
        </Group>
        <Group $width={147} $height={122} $pad="12px 0 0 3px">
          <Legend $left={5}>List</Legend>
          <CheckGrid>
            <Check label="Grid" on /><Check label="Range" on />
            <Check label="Band" /><Check label="Age" />
            <Check label="Report" /><Check label="Msgs" />
            <Check label="Last Msg" />
          </CheckGrid>
        </Group>
        <Group $width={74} $height={84} $pad="10px 0 0 0" $gap={4}>
          <Legend $left={4}>Program</Legend>
          <Button>Settings</Button>
          <Button>Quit</Button>
        </Group>
      </Lower>
    </Window>
  );
}
